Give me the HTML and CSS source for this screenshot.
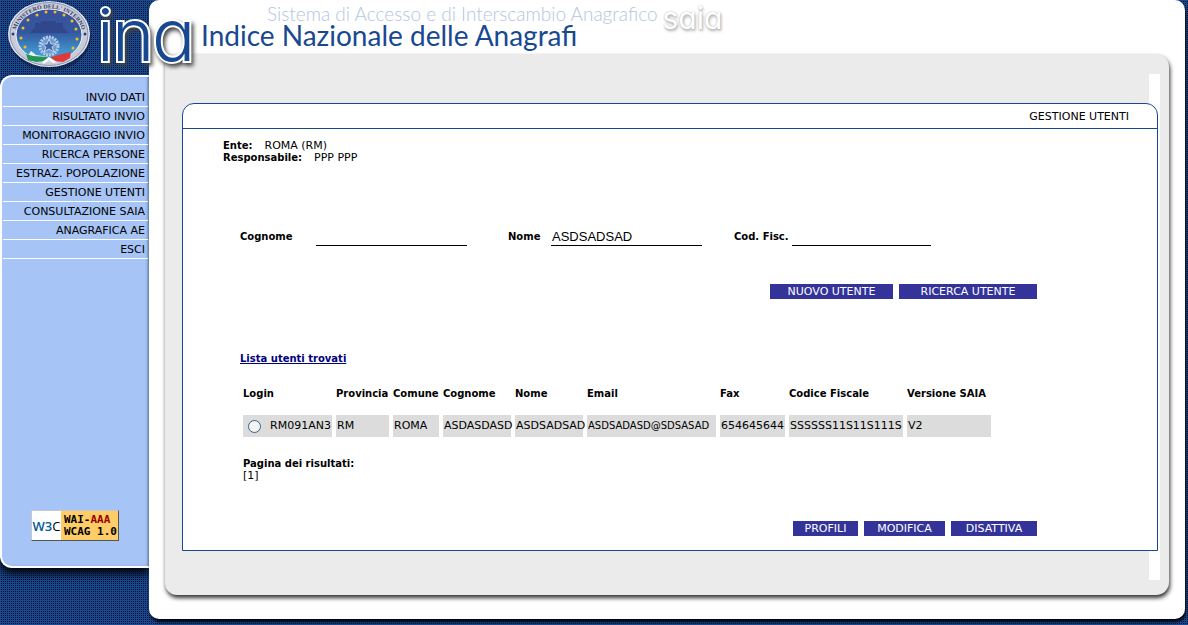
FILE: index.html
```
<!DOCTYPE html>
<html lang="it">
<head>
<meta charset="utf-8">
<title>Indice Nazionale delle Anagrafi</title>
<meta name="viewport" content="width=device-width, initial-scale=1">
<link rel="stylesheet" href="styles.css">
</head>
<body>
<div class="page">
  <aside class="side">
    <div class="brand">
      <svg class="emblem" viewBox="0 0 86 72" role="img" aria-label="Ministero dell'Interno">
        <defs>
          <linearGradient id="sky" x1="0" y1="0" x2="0" y2="1">
            <stop offset="0" stop-color="#3a4f9c"/><stop offset=".45" stop-color="#34589f"/><stop offset=".8" stop-color="#3f92cc"/><stop offset="1" stop-color="#4aa0d8"/>
          </linearGradient>
          <path id="arc" d="M9 37A34 28.500 0 0 1 77 37"/>
        </defs>
        <ellipse cx="44" cy="37" rx="41" ry="34" fill="#0a1838" opacity=".5"/>
        <ellipse cx="43" cy="34" rx="41" ry="33" fill="#e4e6ee"/>
        <ellipse cx="43" cy="34" rx="39" ry="31.500" fill="#c9ccd6"/>
        <ellipse cx="43" cy="34" rx="39" ry="31.500" fill="none" stroke="#8d93b4"/>
        <ellipse cx="43" cy="35" rx="33" ry="26" fill="url(#sky)" stroke="#f0f2f8"/>
        <text class="emblem-text"><textPath href="#arc" startOffset="50%">MINISTERO DELL' INTERNO</textPath></text>
        <path d="M29 27v-4h6v-2h15v2h7v4l5 6H24z" fill="#31478c"/>
        <g fill="#f2c01c"><circle cx="31" cy="15" r="1.500"/><circle cx="40" cy="12" r="1.500"/><circle cx="49" cy="12" r="1.500"/><circle cx="58" cy="15" r="1.500"/><circle cx="22" cy="20" r="1.500"/><circle cx="66" cy="21" r="1.500"/><circle cx="17" cy="28" r="1.500"/><circle cx="70" cy="29" r="1.500"/><circle cx="15" cy="38" r="1.500"/><circle cx="71" cy="39" r="1.500"/><circle cx="19" cy="47" r="1.500"/><circle cx="67" cy="48" r="1.500"/></g>
        <circle cx="7" cy="34" r="1.500" fill="#23408a"/><circle cx="79" cy="34" r="1.500" fill="#23408a"/>
        <circle cx="43" cy="46" r="9" fill="#6d9cd0" stroke="#b5cbe8" stroke-width="3" stroke-dasharray="2 1"/>
        <path d="M43 39l2 5h5l-4 3 2 5-5-3-5 3 2-5-4-3h5z" fill="#3d66a8" stroke="#dce8f5" stroke-width=".8"/>
        <path d="M25 51l5 4 13 2-4 4-12 1-6-5z" fill="#eef3ee"/>
        <path d="M20 54l7 2 15 1-2 4-10 1-8-2z" fill="#219457"/>
        <path d="M45 57l11-3 9-2-1 6-7 4-10-1z" fill="#e0393d"/>
        <path d="M36 62l7-5 8 5-4 1-4-3-5 4z" fill="#fff"/>
      </svg>
    </div>
    <nav class="menu" aria-label="Menu principale">
      <a href="#">INVIO DATI</a>
      <a href="#">RISULTATO INVIO</a>
      <a href="#">MONITORAGGIO INVIO</a>
      <a href="#">RICERCA PERSONE</a>
      <a href="#">ESTRAZ. POPOLAZIONE</a>
      <a href="#">GESTIONE UTENTI</a>
      <a href="#">CONSULTAZIONE SAIA</a>
      <a href="#">ANAGRAFICA AE</a>
      <a href="#">ESCI</a>
      <div class="badge"><span class="w3c"><span class="w3">W3</span><span>C</span></span><span class="wai"><span>WAI-<em>AAA</em></span><span>WCAG 1.0</span></span></div>
    </nav>
  </aside>
  <main class="main">
    <header class="top">
      <div class="saia-line"><span>Sistema di Accesso e di Interscambio Anagrafico</span><span class="saia">sɑiɑ</span></div>
      <h1>Indice Nazionale delle Anagrafi</h1>
    </header>
    <div class="panel">
      <div class="inner">
        <section class="card">
          <h2>GESTIONE UTENTI</h2>
          <form class="content">
            <dl class="who">
              <div><dt>Ente:</dt><dd>ROMA (RM)</dd></div>
              <div><dt>Responsabile:</dt><dd>PPP PPP</dd></div>
            </dl>
            <div class="fields">
              <label class="l-cognome" for="cognome">Cognome</label><input class="i-text" id="cognome" type="text">
              <label class="l-nome" for="nome">Nome</label><input class="i-text" id="nome" type="text" value="ASDSADSAD">
              <label class="l-cf" for="cf">Cod. Fisc.</label><input class="i-text i-cf" id="cf" type="text">
            </div>
            <div class="buttons"><button class="b-nuovo" type="button">NUOVO UTENTE</button><button class="b-ricerca" type="button">RICERCA UTENTE</button></div>
            <a class="list-title" href="#lista">Lista utenti trovati</a>
            <table id="lista">
              <colgroup><col class="c1"><col class="c2"><col class="c3"><col class="c4"><col class="c4"><col class="c6"><col class="c7"><col class="c8"><col class="c9"></colgroup>
              <thead><tr><th>Login</th><th>Provincia</th><th>Comune</th><th>Cognome</th><th>Nome</th><th>Email</th><th>Fax</th><th>Codice Fiscale</th><th>Versione SAIA</th></tr></thead>
              <tbody><tr><td><label class="pick"><input type="radio" name="utente"><span>RM091AN3</span></label></td><td>RM</td><td>ROMA</td><td>ASDASDASD</td><td>ASDSADSAD</td><td class="email">ASDSADASD@SDSASAD</td><td>654645644</td><td>SSSSSS11S11S111S</td><td>V2</td></tr></tbody>
            </table>
            <div class="pages"><b>Pagina dei risultati:</b><span>[1]</span></div>
            <div class="buttons"><button class="b-profili" type="button">PROFILI</button><button class="b-modifica" type="button">MODIFICA</button><button class="b-disattiva" type="button">DISATTIVA</button></div>
          </form>
        </section>
      </div>
    </div>
  </main>
  <svg class="ina" viewBox="0 0 120 80" role="img" aria-label="ina"><text x="3 18 58" y="61">inɑ</text></svg>
</div>
</body>
</html>
```
FILE: styles.css
```
* { box-sizing: border-box; }
body {
  margin: 0;
  font: 11px/12px "DejaVu Sans", sans-serif;
  color: #000;
  background-color: #06122c;
  background-image: linear-gradient(90deg, #184890 50%, transparent 50%), linear-gradient(#184890 50%, transparent 50%);
  background-size: 4px 4px;
  background-image: repeating-linear-gradient(90deg, #184890 0 1px, transparent 1px 2px), repeating-linear-gradient(#184890 0 1px, transparent 1px 2px);
}
.page { position: relative; display: flex; min-height: 100vh; padding: 0 3px 6px 0; }
.side { flex: 0 0 149px; display: flex; flex-direction: column; padding-bottom: 51px; }
.brand { height: 75px; padding-left: 6px; }
.emblem { display: block; width: 86px; height: 72px; }
.emblem-text { font: bold 6px "Liberation Serif", serif; fill: #34406e; text-anchor: middle; }
.menu {
  flex: 1;
  display: flex;
  flex-direction: column;
  padding: 11px 1px 0;
  background: #a6c4f6;
  border: solid #fff;
  border-width: 2px 0 2px 2px;
  border-radius: 12px 0 0 12px;
  box-shadow: 0 6px 8px 0 #000510, inset -2px 0 2px #7f9dd0;
}
.menu a {
  height: 19px;
  padding: 4px 3px 0 0;
  border-bottom: 1px solid #fff;
  color: #000;
  text-align: right;
  text-decoration: none;
  white-space: nowrap;
}
.badge {
  display: flex;
  width: 88px;
  height: 31px;
  margin: auto 0 25px 28px;
  border: 1px solid;
  border-color: #c8c8c8 #555 #555 #c8c8c8;
  background: #ffcc66;
  font: bold 11px/12px "DejaVu Sans Mono", monospace;
}
.w3c { display: flex; align-items: center; justify-content: center; width: 29px; background: #fff; font: 13px/28px "Open Sans", sans-serif; }
.w3 { color: #005a9c; font-weight: 600; }
.wai { display: flex; flex-direction: column; padding: 3px 0 0 3px; white-space: nowrap; }
.wai em { color: #900; font-style: normal; }
.main { flex: 1; min-width: 0; display: flex; flex-direction: column; padding: 0 16px 24px; background: #fff; border-radius: 10px; box-shadow: 1px 3px 3px #000510; }
.top { height: 54px; padding-left: 36px; white-space: nowrap; }
.saia-line { display: flex; gap: 5px; height: 24px; padding: 2px 0 0 66px; font: 300 19px/24px Lato, sans-serif; color: #b4c5de; }
.saia { color: #fff; font: 30px/32px Inter, sans-serif; text-shadow: 1px 2px 3px #aaa, 0 0 2px #bbb; }
h1 { margin: 0; font: 28px/22px Lato, sans-serif; color: #184890; }
.panel { flex: 1; display: flex; padding: 20px 9px 15px 17px; background: #ebebeb; border-radius: 0 13px 13px 12px; box-shadow: 1px 3px 4px 0 #333; }
.inner { flex: 1; min-width: 0; display: flex; padding: 29px 2px 29px 0; background: linear-gradient(#fff, #fff) right / 11px 100% no-repeat; }
.card { flex: 1; min-width: 0; background: #fff; border: 1px solid #184890; border-radius: 12px 12px 0 0; }
h2 { margin: 0; padding: 7px 28px 5px; border-bottom: 1px solid #184890; font: inherit; text-align: right; }
.content { padding: 11px 0 14px 40px; }
.who { margin: 0; }
.who div { display: flex; gap: 12px; }
dt, dd { margin: 0; }
dt, label, th, b { font-weight: bold; font-size: 10px; }
.fields { display: flex; align-items: center; padding: 64px 0 0 17px; height: 81px; }
.i-text { width: 151px; height: 18px; padding: 0 1px; border: 0; border-bottom: 1px solid #000; background: none; font: 13px/16px "Liberation Sans", sans-serif; outline: 0; }
.i-cf { width: 139px; }
.l-cognome { width: 76px; }
.l-nome { width: 43px; margin-left: 41px; }
.l-cf { width: 58px; margin-left: 32px; white-space: nowrap; }
.buttons { display: flex; justify-content: flex-end; gap: 6px; width: 814px; padding-top: 39px; }
button { height: 15px; padding: 0; border: 0; background: #333399; color: #fff; font: 11px/14px "DejaVu Sans", sans-serif; }
.b-nuovo { width: 123px; }
.b-ricerca { width: 138px; }
.b-profili { width: 65px; }
.b-modifica { width: 81px; }
.b-disattiva { width: 86px; }
.list-title { display: inline-block; margin: 54px 0 0 17px; font-size: 10px; font-weight: bold; color: #000080; }
table { table-layout: fixed; width: 756px; margin: 15px 0 0 16px; border-spacing: 4px; }
th, td { padding: 0 1px; text-align: left; white-space: nowrap; }
th { height: 20px; padding: 0; }
thead::after { content: ""; display: block; height: 3px; }
td { height: 22px; background: #dcdcdc; }
.email { font-size: 10px; }
.c1 { width: 89px; } .c2 { width: 53px; } .c3 { width: 46px; } .c4 { width: 68px; }
.c6 { width: 129px; } .c7 { width: 65px; } .c8 { width: 114px; } .c9 { width: 84px; }
.pick { display: flex; align-items: center; gap: 9px; font-weight: normal; font-size: 11px; }
.pick input { flex: none; appearance: none; width: 13px; height: 13px; margin: 0 0 0 4px; border: 1px solid #33648f; border-radius: 50%; background: #f4f4f2; }
.pick input:checked { background: radial-gradient(#2a8a2a 3px, #f4f4f2 4px); }
.pages { display: flex; flex-direction: column; margin: 17px 0 0 20px; }
.ina { position: absolute; left: 94px; top: 0; width: 120px; height: 80px; pointer-events: none; filter: drop-shadow(2px 3px 2px #444); }
.ina text { font: 300 72px Inter, sans-serif; fill: #184890; stroke: #fff; stroke-width: 4px; paint-order: stroke; }
```
